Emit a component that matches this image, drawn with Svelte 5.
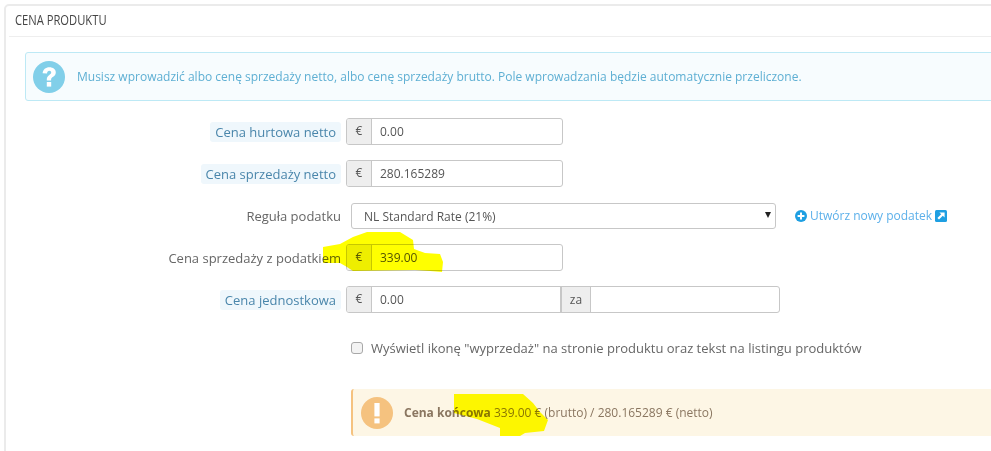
<script>
  const rows = [
    { label: "Cena hurtowa netto", value: "0.00", hint: true },
    { label: "Cena sprzedaży netto", value: "280.165289", hint: true }
  ];
</script>

<div class="page">
  <section class="panel">
    <h3><span>Cena produktu</span></h3>

    <div class="alert info">
      <svg class="badge" viewBox="0 0 32 32" width="32" height="32">
        <circle cx="16" cy="16" r="16" fill="#81cfe9" />
        <path d="M9.6 12.2C10 8.4 12.6 6.2 16.4 6.2c3.8 0 6.4 2.2 6.4 5.2 0 2.4-1.4 3.6-3 4.7-1.2.8-1.7 1.4-1.7 2.7v.6h-4.3v-1c0-2.2.8-3.3 2.5-4.5 1.2-.8 1.9-1.4 1.9-2.4 0-1-.7-1.7-1.9-1.7-1.3 0-2.1.9-2.3 2.6z" fill="#fff" />
        <rect x="13.8" y="21" width="4.4" height="4.6" fill="#fff" />
      </svg>
      <span>Musisz wprowadzić albo cenę sprzedaży netto, albo cenę sprzedaży brutto. Pole wprowadzania będzie automatycznie przeliczone.</span>
    </div>

    <div class="form">
      {#each rows as row}
        <div class="row">
          <div class="label"><span class="hint">{row.label}</span></div>
          <div class="group price">
            <span class="addon">€</span>
            <span class="input">{row.value}</span>
          </div>
        </div>
      {/each}

      <div class="row">
        <div class="label">Reguła podatku</div>
        <div class="select">
          <span>NL Standard Rate (21%)</span>
          <i class="caret"></i>
        </div>
        <a class="create" href="#tax">
          <svg viewBox="0 0 12 12" width="12" height="12">
            <circle cx="6" cy="6" r="6" fill="#1e9fe2" />
            <path d="M5 2.6h2V5h2.4v2H7v2.4H5V7H2.6V5H5z" fill="#fff" />
          </svg>
          Utwórz nowy podatek
          <svg viewBox="0 0 12 12" width="12" height="12">
            <rect width="12" height="12" rx="1.5" fill="#1e9fe2" />
            <path d="M4.4 2.4h5.2v5.2L7.8 5.8 4 9.6 2.4 8l3.8-3.8z" fill="#fff" />
          </svg>
        </a>
      </div>

      <div class="row">
        <div class="label">Cena sprzedaży z podatkiem</div>
        <div class="group price">
          <span class="addon">€</span>
          <span class="input">339.00</span>
        </div>
      </div>

      <div class="row">
        <div class="label"><span class="hint">Cena jednostkowa</span></div>
        <div class="group unit">
          <span class="addon">€</span>
          <span class="input first">0.00</span>
          <span class="addon mid">za</span>
          <span class="input last"></span>
        </div>
      </div>

      <label class="check">
        <input type="checkbox" />
        Wyświetl ikonę "wyprzedaż" na stronie produktu oraz tekst na listingu produktów
      </label>

      <div class="alert warn">
        <svg class="badge" viewBox="0 0 32 32" width="32" height="32">
          <circle cx="16" cy="16" r="16" fill="#f5c27f" />
          <rect x="13.4" y="6" width="5.2" height="13.4" fill="#fff" />
          <rect x="13.4" y="21.4" width="5.2" height="5" fill="#fff" />
        </svg>
        <span><b>Cena końcowa</b> 339.00 € (brutto) / 280.165289 € (netto)</span>
      </div>
    </div>
  </section>

  <svg class="marker" viewBox="0 0 991 451" width="991" height="451">
    <path d="M323 247 L340 244 L353 237 L367 232 L400 232 L413 240 L414 249 L425 253 L440 254 L443 262 L442 272 L430 271 L415 270 L353 271 L347 267 L340 263 L323 263 Z" />
    <path d="M454 394 L523 394 L533 403 L540 412 L548 420 L544 431 L525 433 L520 436 L500 436 L500 428 L477 419 L454 413 Z" />
  </svg>
</div>

<style>
  :global(body) {
    margin: 0;
    overflow: hidden;
    background: #fff;
  }
  .page {
    position: relative;
    width: 991px;
    height: 451px;
    overflow: hidden;
    font-family: "Open Sans", sans-serif;
    font-size: 12px;
    color: #666;
    padding: 4px 0 0 4px;
    box-sizing: border-box;
  }
  .panel {
    width: 1010px;
    height: 470px;
    border: 2px solid #ebebeb;
    border-radius: 5px;
    padding: 0 0 0 3px;
    box-sizing: border-box;
  }
  h3 {
    margin: 0;
    height: 30px;
    line-height: 28px;
    padding-left: 6px;
    border-bottom: 1px solid #eee;
    font-family: "Open Sans", sans-serif;
    font-size: 14px;
    font-weight: 400;
    text-transform: uppercase;
    color: #444;
  }
  h3 span {
    display: inline-block;
    transform: scaleX(0.8);
    transform-origin: left center;
    white-space: nowrap;
  }
  .alert {
    display: flex;
    align-items: center;
    box-sizing: border-box;
  }
  .info {
    margin: 15px 0 0 16px;
    height: 49px;
    padding-left: 7px;
    gap: 12px;
    background: #f7fcfe;
    border: 1px solid #bde9f5;
    border-radius: 3px;
    color: #5eafd3;
    font-size: 12px;
  }
  .form {
    margin-top: 17px;
    display: flex;
    flex-direction: column;
  }
  .row {
    display: flex;
    align-items: center;
    height: 27px;
    margin-bottom: 15px;
  }
  .label {
    width: 332px;
    text-align: right;
    font-size: 13px;
    color: #666;
    flex: none;
  }
  .hint {
    padding: 1px 5px;
    background: #eff7fc;
    border-radius: 3px;
    color: #4a86ab;
  }
  .group {
    display: flex;
    height: 27px;
    margin-left: 5px;
    border: 1px solid #c7c7c7;
    border-radius: 3px;
    box-sizing: border-box;
    overflow: hidden;
  }
  .price {
    width: 217px;
  }
  .unit {
    width: 434px;
  }
  .addon {
    width: 24px;
    flex: none;
    background: #eee;
    border-right: 1px solid #c7c7c7;
    text-align: center;
    line-height: 24px;
    font-size: 12px;
    color: #555;
  }
  .addon.mid {
    width: 28px;
    border-left: 2px solid #c7c7c7;
    line-height: 26px;
  }
  .input {
    flex: 1;
    padding-left: 8px;
    line-height: 26px;
    font-size: 12px;
    color: #555;
  }
  .input.first {
    flex: none;
    width: 188px;
    box-sizing: border-box;
  }
  .select {
    display: flex;
    align-items: center;
    justify-content: space-between;
    width: 425px;
    height: 26px;
    margin-left: 10px;
    padding: 2px 4px 0 12px;
    box-sizing: border-box;
    border: 1px solid #c7c7c7;
    border-radius: 3px;
    color: #555;
  }
  .caret {
    width: 0;
    height: 0;
    margin-top: -3px;
    border-left: 3.5px solid transparent;
    border-right: 3.5px solid transparent;
    border-top: 6px solid #222;
  }
  .create {
    display: flex;
    align-items: center;
    gap: 3px;
    margin-left: 19px;
    color: #5cb0ea;
    text-decoration: none;
    font-size: 12px;
  }
  .check {
    display: flex;
    align-items: center;
    gap: 8px;
    margin: 9px 0 0 342px;
    height: 22px;
    font-size: 13px;
    color: #666;
  }
  .check input {
    appearance: none;
    width: 12px;
    height: 12px;
    margin: 0;
    background: #f3f3f3;
    border: 1px solid #a8a8a8;
    border-radius: 3px;
    box-sizing: border-box;
  }
  .warn {
    margin: 30px 0 0 342px;
    height: 47px;
    width: 660px;
    padding-left: 8px;
    gap: 11px;
    background: #fdf6e5;
    border-left: 2px solid #f5c27f;
    border-radius: 3px;
    font-size: 12px;
    color: #8a7660;
  }
  .marker {
    position: absolute;
    left: 0;
    top: 0;
    mix-blend-mode: multiply;
    pointer-events: none;
  }
  .marker path {
    fill: #ffff00;
  }
</style>
